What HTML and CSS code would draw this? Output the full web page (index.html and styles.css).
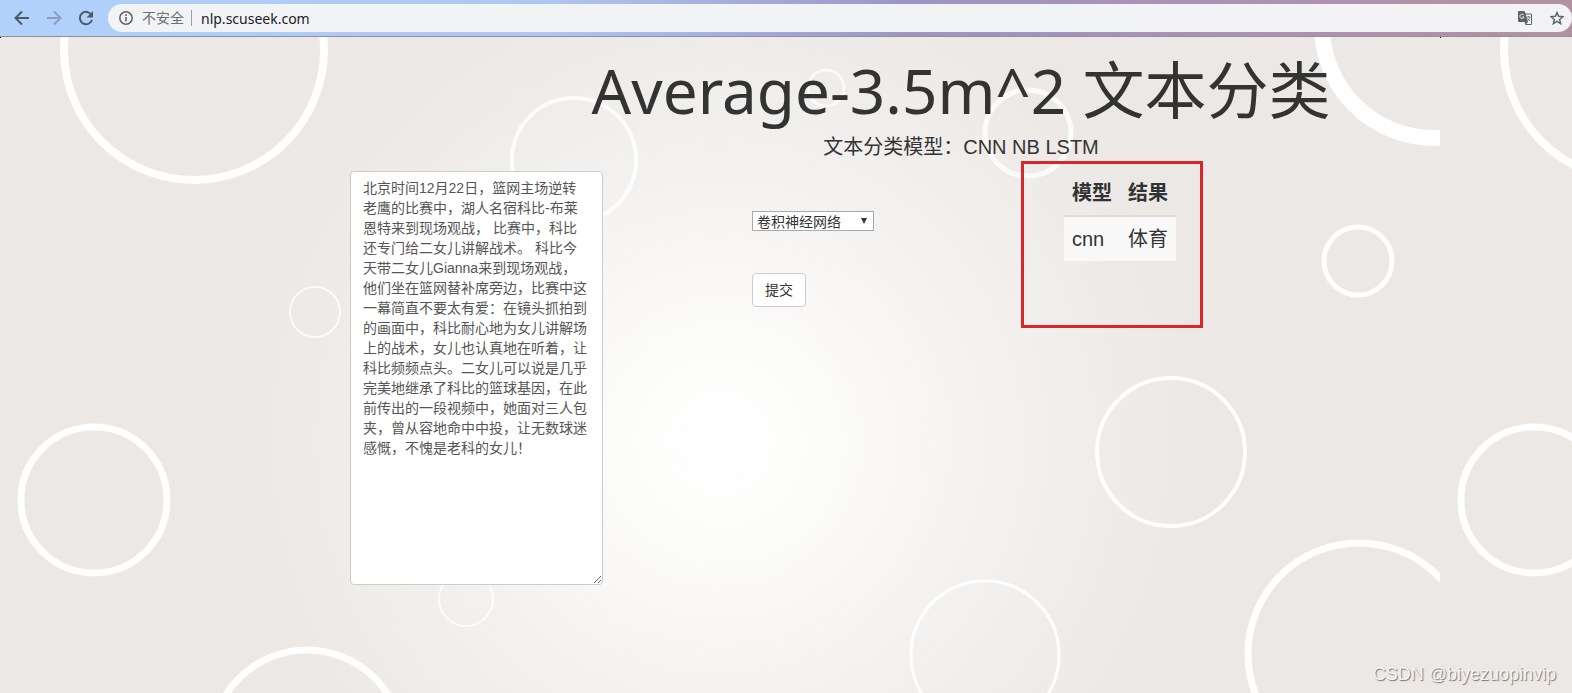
FILE: index.html
```
<!DOCTYPE html>
<html lang="zh-CN">
<head>
<meta charset="utf-8">
<title>文本分类</title>
<link rel="stylesheet" href="styles.css">
</head>
<body>
<header class="toolbar">
  <nav class="nav-buttons" aria-label="导航">
    <button class="icon-button" type="button" aria-label="后退"><svg width="16" height="16" viewBox="0 0 16 16"><path d="M15 8H2M8 1.500 1.500 8 8 14.500" fill="none" stroke="currentColor" stroke-width="2"/></svg></button>
    <button class="icon-button icon-button-disabled" type="button" aria-label="前进"><svg width="16" height="16" viewBox="0 0 16 16"><path d="M1 8h13M8 1.500 14.500 8 8 14.500" fill="none" stroke="currentColor" stroke-width="2"/></svg></button>
    <button class="icon-button" type="button" aria-label="刷新"><svg width="16" height="16" viewBox="0 0 16 16"><path d="M13.500 5A6.200 6.200 0 1 0 14 10" fill="none" stroke="currentColor" stroke-width="2"/><path d="M15 1v6.500H8.500z" fill="currentColor"/></svg></button>
  </nav>
  <div class="address">
    <svg class="info" width="14" height="14" viewBox="0 0 14 14"><circle cx="7" cy="7" r="6.200" fill="none" stroke="currentColor" stroke-width="1.500"/><path d="M7 6v4.500M7 3.300v1.700" stroke="currentColor" stroke-width="1.600"/></svg>
    <span class="insecure">不安全</span>
    <input class="url" type="text" aria-label="网址" value="nlp.scuseek.com">
    <button class="icon-button" type="button" aria-label="翻译"><svg width="14" height="14" viewBox="0 0 14 14"><path d="M1 0h5.500l1 2.500H13a1 1 0 0 1 1 1V13a1 1 0 0 1-1 1H7.500L6.500 11H1a1 1 0 0 1-1-1V1a1 1 0 0 1 1-1z" fill="currentColor"/><path d="M7.900 3.500H13V13H8.300L10 11z" fill="#f1f3f4"/><path d="M5.800 4.300A2.100 2.100 0 1 0 6 6H4.200" fill="none" stroke="#f1f3f4" stroke-width="1"/><path d="M8.700 6h3.800M10.500 5v1M11.800 6c-.3 2-1.500 3.300-2.500 4M9.500 7.500l2.500 2.500" fill="none" stroke="currentColor" stroke-width=".8"/></svg></button>
    <button class="icon-button" type="button" aria-label="收藏"><svg width="14" height="14" viewBox="0 0 14 14"><path d="M7 1.500 8.600 5.300l4.400.3-3.400 2.800 1.100 4.300L7 10.400l-3.700 2.300 1.100-4.300L1 5.600l4.400-.3z" fill="none" stroke="currentColor" stroke-width="1.400"/></svg></button>
  </div>
</header>
<main class="page">
  <svg class="bubbles" aria-hidden="true">
    <defs>
      <radialGradient id="glow" gradientUnits="userSpaceOnUse" cx="720" cy="405" r="480">
        <stop offset="0" stop-color="#ffffff"/>
        <stop offset=".2" stop-color="#fcfcfb"/>
        <stop offset=".6" stop-color="#f3f1ef"/>
        <stop offset="1" stop-color="#ebe8e5"/>
      </radialGradient>
      <pattern id="tile" width="1440" height="900" patternUnits="userSpaceOnUse">
        <rect width="1440" height="900" fill="url(#glow)"/>
        <rect width="1" height="1" fill="#000000"/>
        <g fill="none" stroke="#ffffff">
          <circle cx="194" cy="13" r="130" stroke-width="8"/>
          <circle cx="94" cy="463" r="73" stroke-width="7"/>
          <circle cx="307" cy="709" r="96" stroke-width="7"/>
          <circle cx="1434" cy="-11" r="112" stroke-width="16"/>
          <circle cx="1359" cy="617" r="111" stroke-width="7"/>
          <circle cx="1358" cy="224" r="34" stroke-width="5"/>
          <circle cx="1171" cy="415" r="74" stroke-width="4"/>
          <circle cx="985" cy="618" r="74" stroke-width="3"/>
          <circle cx="1028" cy="96" r="43" stroke-width="5" opacity=".8"/>
          <circle cx="574" cy="123" r="62" stroke-width="4" opacity=".8"/>
          <circle cx="826" cy="51" r="18" stroke-width="3" opacity=".7"/>
          <circle cx="315" cy="275" r="25" stroke-width="2" opacity=".8"/>
          <circle cx="466" cy="562" r="27" stroke-width="2" opacity=".8"/>
        </g>
      </pattern>
    </defs>
    <rect width="100%" height="100%" fill="url(#tile)"/>
  </svg>
  <div class="content">
    <h1 class="title">Average-3.5m^2 文本分类</h1>
    <p class="subtitle">文本分类模型：CNN NB LSTM</p>
    <form class="columns">
      <textarea class="article" aria-label="文本">北京时间12月22日，篮网主场逆转老鹰的比赛中，湖人名宿科比-布莱恩特来到现场观战， 比赛中，科比还专门给二女儿讲解战术。 科比今天带二女儿Gianna来到现场观战，他们坐在篮网替补席旁边，比赛中这一幕简直不要太有爱：在镜头抓拍到的画面中，科比耐心地为女儿讲解场上的战术，女儿也认真地在听着，让科比频频点头。二女儿可以说是几乎完美地继承了科比的篮球基因，在此前传出的一段视频中，她面对三人包夹，曾从容地命中中投，让无数球迷感慨，不愧是老科的女儿！</textarea>
      <div class="controls">
        <div class="select-box">
          <select class="model" aria-label="模型"><option>卷积神经网络</option></select>
        </div>
        <button class="submit" type="button">提交</button>
      </div>
      <div class="result-frame">
        <table class="result">
          <thead><tr><th>模型</th><th>结果</th></tr></thead>
          <tbody><tr><td>cnn</td><td>体育</td></tr></tbody>
        </table>
      </div>
    </form>
  </div>
  <p class="watermark">CSDN @biyezuopinvip</p>
</main>
</body>
</html>
```
FILE: styles.css
```
* { box-sizing: border-box; }
html, body { height: 100%; }
body {
  margin: 0;
  display: flex;
  flex-direction: column;
  overflow: hidden;
  color: #333;
  font-family: "Liberation Sans", "Noto Sans CJK SC", sans-serif;
  font-size: 14px;
  line-height: 20px;
}
button { font: inherit; }

.toolbar {
  display: flex;
  align-items: center;
  gap: 14px;
  padding: 4px 0 4px 14px;
  border-bottom: 1px solid #8f9099;
  background: linear-gradient(90deg, #b2d1fd 0%, #adc6f3 35%, #9d95c4 58%, #ae91b3 80%, #b2929f 100%);
}
.nav-buttons { display: flex; gap: 16px; }
.icon-button {
  display: flex;
  padding: 0;
  border: 0;
  background: none;
  color: #5f6368;
}
.nav-buttons .icon-button { color: #4d5a63; }
.nav-buttons .icon-button-disabled { color: #8b9fbd; }
.address {
  flex: 1;
  display: flex;
  align-items: center;
  gap: 9px;
  height: 28px;
  padding: 0 8px 0 11px;
  border-radius: 14px;
  background: #f1f3f4;
}
.address .icon-button + .icon-button { margin-left: 9px; }
.info { color: #5f6368; }
.insecure {
  padding-right: 7px;
  border-right: 1px solid #9aa0a6;
  color: #6b6f74;
  line-height: 16px;
}
.url {
  flex: 1;
  min-width: 0;
  padding: 0;
  border: 0;
  background: none;
  color: #202124;
  font-family: "Noto Sans", "Open Sans", sans-serif;
  font-size: 14px;
}

.page {
  position: relative;
  flex: 1;
  min-height: 0;
  background: #ebe8e5;
}
.bubbles {
  position: absolute;
  inset: 0;
  width: 100%;
  height: 100%;
}
.content {
  position: relative;
  padding: 20px 0 0 350px;
}
.title {
  margin: 0;
  font-family: "Noto Sans", "Noto Sans CJK SC", sans-serif;
  font-size: 62px;
  font-weight: 400;
  line-height: 66px;
  text-align: center;
}
.subtitle {
  margin: 10px 0;
  font-size: 20px;
  line-height: 28px;
  text-align: center;
}
.columns {
  display: flex;
  align-items: flex-start;
}
.article {
  width: 253px;
  height: 414px;
  padding: 6px 12px;
  border: 1px solid #ccc;
  border-radius: 4px;
  background: #fff;
  color: #555;
  font: inherit;
  resize: both;
}
.controls {
  display: flex;
  flex-direction: column;
  align-items: flex-start;
  gap: 42px;
  margin: 40px 0 0 149px;
}
.select-box { position: relative; display: flex; }
.select-box::after {
  content: "";
  position: absolute;
  top: 7px;
  right: 7px;
  border: 3px solid transparent;
  border-top: 6px solid #333;
  border-bottom: 0;
  pointer-events: none;
}
.model {
  width: 122px;
  height: 20px;
  padding: 0 4px;
  border: 1px solid #a9a9a9;
  border-radius: 0;
  background: #fff;
  color: #333;
  font: inherit;
  appearance: none;
}
.submit {
  padding: 6px 12px;
  border: 1px solid #ccc;
  border-radius: 4px;
  background: #fff;
  color: #333;
}
.result-frame {
  width: 182px;
  height: 167px;
  margin: -10px 0 0 147px;
  padding: 7px 24px 0 40px;
  border: 3px solid #d9262b;
}
.result {
  border-collapse: collapse;
  font-size: 20px;
  line-height: 28px;
  text-align: left;
}
.result th { padding: 8px; border-bottom: 2px solid #ddd; }
.result td { padding: 8px; background: #f9f9f9; }
.watermark {
  position: absolute;
  right: 16px;
  bottom: 7px;
  margin: 0;
  color: #f4f4f4;
  font-size: 18px;
  line-height: 24px;
  text-shadow: 1px 1px 1px #777;
}
```
